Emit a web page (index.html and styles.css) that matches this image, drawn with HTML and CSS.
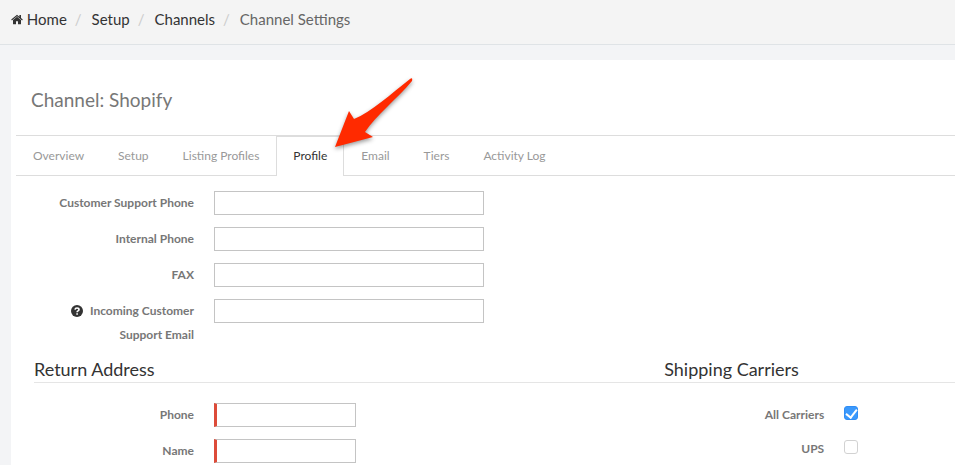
FILE: index.html
```
<!DOCTYPE html>
<html lang="en">
<head>
  <meta charset="UTF-8">
  <meta name="viewport" content="width=device-width, initial-scale=1.0">
  <title>Channel Settings</title>
  <link rel="stylesheet" href="styles.css">
</head>
<body>
  <nav class="breadcrumb">
    <a href="#">
      <svg class="icon-home" viewBox="0 0 24 20" aria-hidden="true">
        <path d="M12 4.6 L4 11.2 V18.5 Q4 19.5 5 19.5 H10 V13.5 H14 V19.5 H19 Q20 19.5 20 18.5 V11.2 Z"/>
        <path d="M12 0.5 L0.4 10.1 L1.8 11.8 L12 3.4 L22.2 11.8 L23.6 10.1 L20 7.1 V1.2 H16.8 V4.5 Z"/>
      </svg>
      Home</a>
    <span class="divider">/</span>
    <a href="#">Setup</a>
    <span class="divider">/</span>
    <a href="#">Channels</a>
    <span class="divider">/</span>
    <span class="current">Channel Settings</span>
  </nav>

  <main class="panel">
    <h1>Channel: Shopify</h1>

    <nav class="tabs">
      <a href="#">Overview</a>
      <a href="#">Setup</a>
      <a href="#">Listing Profiles</a>
      <a href="#" class="active">Profile
        <svg class="arrow" viewBox="0 0 84 76" aria-hidden="true">
          <path d="M2 71 L16 35 L21 43 C38 36 58 18 77 3 Q80 1 79 5 C64 23 43 39 32 56 L40 61 Z"/>
        </svg>
      </a>
      <a href="#">Email</a>
      <a href="#">Tiers</a>
      <a href="#">Activity Log</a>
    </nav>

    <form>
      <div class="contact">
        <div class="field">
          <label for="support-phone">Customer Support Phone</label>
          <input type="text" id="support-phone">
        </div>
        <div class="field">
          <label for="internal-phone">Internal Phone</label>
          <input type="text" id="internal-phone">
        </div>
        <div class="field">
          <label for="fax">FAX</label>
          <input type="text" id="fax">
        </div>
        <div class="field">
          <label for="support-email">
            <svg class="icon-help" viewBox="0 0 12 12" aria-hidden="true">
              <circle cx="6" cy="6" r="6"/>
              <path d="M4 4.6 Q4.2 3 6 3 Q8 3 8 4.5 Q8 5.3 7 5.9 Q6.1 6.4 6.1 7.2"/>
              <path d="M6.1 8.3 V9.8"/>
            </svg>
            Incoming Customer Support Email</label>
          <input type="text" id="support-email">
        </div>
      </div>

      <div class="columns">
        <section>
          <h2>Return Address</h2>
          <div class="field">
            <label for="phone">Phone</label>
            <input type="text" id="phone" class="required">
          </div>
          <div class="field">
            <label for="name">Name</label>
            <input type="text" id="name" class="required">
          </div>
        </section>
        <section class="carriers">
          <h2>Shipping Carriers</h2>
          <div class="field">
            <label for="all-carriers">All Carriers</label>
            <input type="checkbox" id="all-carriers" checked>
          </div>
          <div class="field">
            <label for="ups">UPS</label>
            <input type="checkbox" id="ups">
          </div>
        </section>
      </div>
    </form>
  </main>
</body>
</html>
```
FILE: styles.css
```
* {
  box-sizing: border-box;
}

body {
  margin: 0;
  font-family: Lato, "Liberation Sans", sans-serif;
  font-size: 12px;
  line-height: 24px;
  color: #777;
  background: #f3f4f6;
}

a {
  color: inherit;
  text-decoration: none;
}

/* Breadcrumb */
.breadcrumb {
  display: flex;
  padding: 7px 11px 13px;
  font-size: 15px;
  color: #333;
  background: #f4f4f4;
  border-bottom: 1px solid #dfe3e6;
}

.breadcrumb .divider {
  padding: 0 10px 0 8px;
  color: #ccc;
}

.breadcrumb .current {
  color: #666;
}

.icon-home {
  width: 12px;
  height: 11px;
  fill: #333;
}

/* Panel */
.panel {
  margin: 15px 0 0 11px;
  padding-left: 5px;
  background: #fff;
}

h1 {
  margin: 0;
  padding: 28px 15px 23px;
  font-size: 19px;
  font-weight: 400;
  color: #777;
}

/* Tabs */
.tabs {
  display: flex;
  border-top: 1px solid #ddd;
  border-bottom: 1px solid #ddd;
}

.tabs a {
  position: relative;
  margin-bottom: -1px;
  padding: 7px 16px 8px;
  border: 1px solid transparent;
  border-bottom: 0;
  color: #999;
}

.tabs .active {
  color: #333;
  background: #fff;
  border-color: #ddd;
}

/* Pointer laid over the active tab */
.arrow {
  position: absolute;
  z-index: 1;
  left: 56px;
  bottom: 24px;
  width: 84px;
  height: 76px;
  fill: #ff2a00;
  filter: drop-shadow(0 2px 2px rgba(0, 0, 0, 0.4));
  pointer-events: none;
}

/* Form */
.field {
  display: flex;
  align-items: flex-start;
  gap: 20px;
  margin-bottom: 12px;
}

.field label {
  flex: 0 0 160px;
  font-weight: 700;
  text-align: right;
}

.contact {
  padding: 15px 18px 0;
}

.contact .field:last-child {
  margin-bottom: 9px;
}

.icon-help {
  width: 12px;
  height: 12px;
  margin-right: 4px;
  vertical-align: -2px;
  fill: #333;
}

.icon-help path {
  fill: none;
  stroke: #fff;
  stroke-width: 1.6;
}

input[type="text"] {
  width: 270px;
  height: 24px;
  padding: 2px 6px;
  font: inherit;
  color: #333;
  background: #fff;
  border: 1px solid #c4c4c4;
  border-radius: 0;
}

input.required {
  width: 142px;
  border-left: 3px solid #dd4b39;
}

.columns {
  display: grid;
  grid-template-columns: 13fr 6fr;
  padding-left: 18px;
}

h2 {
  margin: 0 0 20px;
  border-bottom: 1px solid #e5e5e5;
  font-size: 18px;
  font-weight: 400;
  line-height: 26px;
  color: #333;
}

.carriers .field {
  margin-bottom: 10px;
}

input[type="checkbox"] {
  appearance: none;
  width: 14px;
  height: 14px;
  margin: 3px 0;
  background: #fff;
  border: 1px solid #d2d2d2;
  border-radius: 3px;
}

/* Check mark */
input[type="checkbox"]:checked {
  display: grid;
  place-items: center;
  background: #3b99fc;
  border-color: #2f8df5;
}

input[type="checkbox"]:checked::before {
  content: "";
  width: 5px;
  height: 9px;
  margin-bottom: 2px;
  border: solid #fff;
  border-width: 0 2px 2px 0;
  transform: rotate(38deg);
}
```
